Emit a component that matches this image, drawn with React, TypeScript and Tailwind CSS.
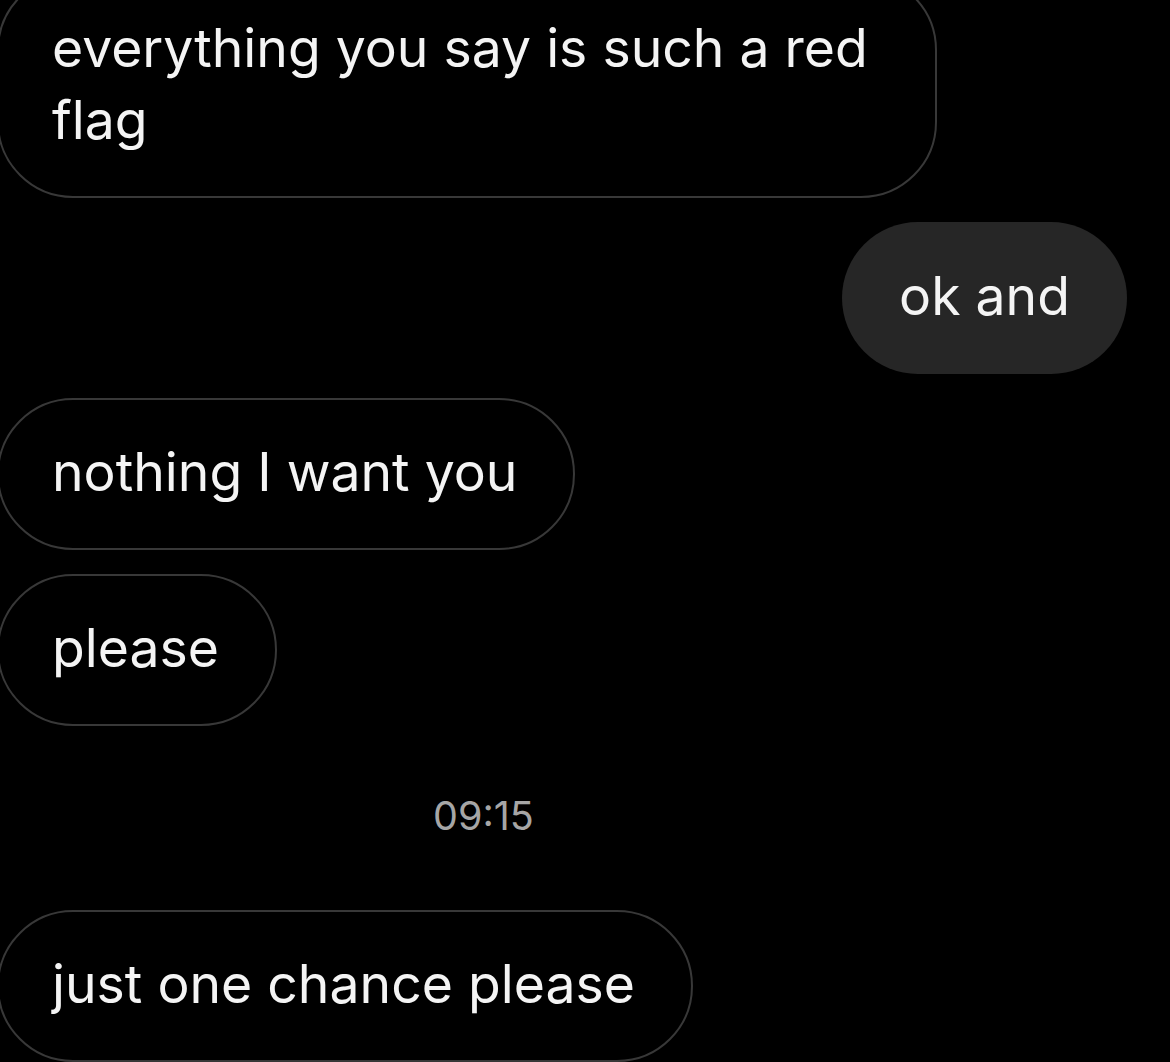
import React from "react";

function Received({ children, className = "" }: { children: React.ReactNode; className?: string }) {
  return (
    <div
      className={`self-start ml-[-3px] border-2 border-[#383838] rounded-[76px] pl-[53px] pr-[56px] pt-[36px] pb-[40px] text-[53.5px] leading-[72px] text-[#f4f4f4] ${className}`}
    >
      {children}
    </div>
  );
}

export default function App() {
  return (
    <div className="w-[1170px] h-[1062px] bg-black overflow-hidden font-['Inter','Noto_Sans',sans-serif] antialiased">
      <div className="flex flex-col mt-[-26px]">
        <Received className="w-[940px]">everything you say is such a red flag</Received>
        <div className="self-end mr-[43px] mt-[24px] rounded-[76px] bg-[#262626] px-[57px] pt-[38px] pb-[42px] text-[53.5px] leading-[72px] text-[#f4f4f4]">
          ok and
        </div>
        <Received className="mt-[24px]">nothing I want you</Received>
        <Received className="mt-[24px]">please</Received>
        <div className="self-start ml-[433px] mt-[70px] text-[39.5px] leading-[40px] text-[#a6a6a6]">09:15</div>
        <Received className="mt-[74px]">just one chance please</Received>
      </div>
    </div>
  );
}
